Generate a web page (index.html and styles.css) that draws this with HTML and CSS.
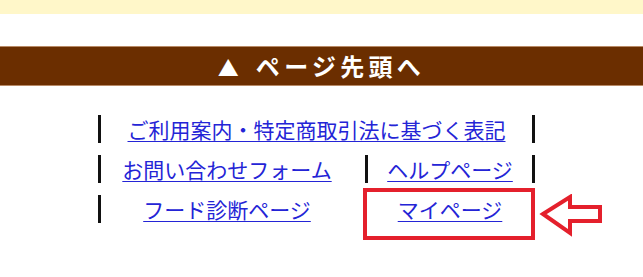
FILE: index.html
```html
<!DOCTYPE html>
<html lang="ja">
<head>
<meta charset="utf-8">
<link rel="stylesheet" href="styles.css">
</head>
<body>
<div class="topbar"></div>
<div class="pagetop"><a class="pagetop-link" href="#"><span class="tri">▲</span>ページ先頭へ</a></div>
<nav class="footnav">
  <div class="row">
    <div class="cell cell-full"><a href="#">ご利用案内・特定商取引法に基づく表記</a></div>
  </div>
  <div class="row">
    <div class="cell cell-left"><a href="#">お問い合わせフォーム</a></div>
    <div class="cell cell-right"><a href="#">ヘルプページ</a></div>
  </div>
  <div class="row">
    <div class="cell cell-left"><a href="#">フード診断ページ</a></div>
    <div class="cell cell-right cell-marked"><a href="#">マイページ</a>
      <svg class="arrow" width="66" height="44" viewBox="0 0 66 44" xmlns="http://www.w3.org/2000/svg">
        <polygon points="4,20 31,3 31,13 61,13 61,27 31,27 31,39" fill="none" stroke="#e4202c" stroke-width="4" stroke-linejoin="miter"/>
      </svg>
    </div>
  </div>
</nav>
</body>
</html>
```
FILE: styles.css
```css
html, body {
  margin: 0;
  padding: 0;
  background: #ffffff;
  font-family: "Noto Sans CJK JP", "Noto Sans", sans-serif;
}
body {
  min-height: 277px;
}
.topbar {
  height: 14px;
  background: #fff7c9;
}
.pagetop {
  margin-top: 32px;
  height: 38px;
  background: #6b2e00;
  border-top: 1px solid #b88a66;
  border-bottom: 1px solid #b88a66;
  text-align: center;
}
.pagetop-link {
  color: #ffffff;
  font-weight: bold;
  font-size: 24px;
  line-height: 38px;
  letter-spacing: 4.3px;
  text-decoration: none;
}
.tri {
  font-size: 21px;
  letter-spacing: 0;
  margin-right: 17px;
}
.footnav {
  margin: 29px 0 0 98px;
  width: 437px;
  display: flex;
  flex-direction: column;
  gap: 12px;
}
.row {
  display: flex;
  height: 28px;
}
.cell {
  box-sizing: border-box;
  height: 28px;
  line-height: 28px;
  text-align: center;
  font-size: 21px;
}
.cell a {
  color: #2424d6;
  text-decoration: underline;
  text-underline-offset: 3px;
  text-decoration-thickness: 1px;
}
.cell-full {
  width: 437px;
  border-left: 3px solid #111;
  border-right: 3px solid #111;
}
.cell-left {
  width: 267px;
  border-left: 3px solid #111;
  padding-right: 12px;
}
.cell-right {
  width: 170px;
  border-left: 3px solid #111;
  border-right: 3px solid #111;
}
.cell-marked {
  position: relative;
  border-color: transparent;
}
.cell-marked::after {
  content: "";
  position: absolute;
  left: -5px;
  right: -3px;
  top: -7px;
  bottom: -17px;
  border: 4px solid #e4202c;
  pointer-events: none;
}
.arrow {
  position: absolute;
  left: 171px;
  top: -1px;
}
```
